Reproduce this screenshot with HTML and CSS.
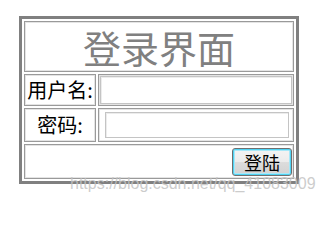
FILE: index.html
```html
<!DOCTYPE html>
<html>
<head>
<meta charset="utf-8">
<link rel="stylesheet" href="styles.css">
</head>
<body>
<table class="login">
  <tr class="row-title">
    <td colspan="2" class="title">登录界面</td>
  </tr>
  <tr class="row-user">
    <td class="label">用户名:</td>
    <td class="field"><input class="input input-user" type="text"></td>
  </tr>
  <tr class="row-pass">
    <td class="label">密码:</td>
    <td class="field"><input class="input input-pass" type="password"></td>
  </tr>
  <tr class="row-btn">
    <td colspan="2" class="actions"><button class="btn">登陆</button></td>
  </tr>
</table>
<div class="watermark">https://blog.csdn.net/qq_41083009</div>
</body>
</html>
```
FILE: styles.css
```css
html, body {
  margin: 0;
  padding: 0;
  background: #ffffff;
}
body {
  position: relative;
  width: 326px;
  height: 203px;
  overflow: hidden;
  font-family: "Noto Sans CJK SC", "Liberation Serif", serif;
}
.login {
  margin: 16px 0 0 19px;
  border: 3px solid #808080;
  border-spacing: 2px;
  width: 280px;
}
.login td {
  border: 1px solid #9a9a9a;
  box-shadow: inset 1px 1px 0 #e4e4e4, inset -1px -1px 0 #e4e4e4;
  padding: 0;
}
.row-title td { height: 49px; }
.row-user td { height: 30px; }
.row-pass td { height: 32px; }
.row-btn td { height: 33px; }
.title {
  text-align: center;
  font-size: 38px;
  line-height: 40px;
  color: #808080;
  padding-bottom: 2px;
}
.label {
  width: 70px;
  text-align: center;
  font-size: 20px;
  line-height: 24px;
  color: #000;
  white-space: nowrap;
}
.field {
  vertical-align: middle;
}
.input {
  display: block;
  box-sizing: border-box;
  border: 1px solid #c4c4c4;
  box-shadow: inset 1px 1px 0 #ececec;
  background: #fff;
  outline: none;
  padding: 0;
}
.input-user {
  width: 192px;
  height: 28px;
  margin-left: 1px;
}
.input-pass {
  width: 184px;
  height: 26px;
  margin-left: 6px;
}
.actions {
  text-align: right;
  vertical-align: middle;
  padding-right: 1px !important;
}
.btn {
  box-sizing: border-box;
  width: 60px;
  height: 28px;
  margin: 0;
  padding: 0;
  border: 1px solid #6f6f6f;
  border-radius: 3px;
  box-shadow: inset 0 0 0 1px #4fd3f3, inset 0 0 0 2px #a8e8f8;
  background: linear-gradient(#f4f4f4 0%, #ececec 48%, #dcdcdc 52%, #d2d2d2 100%);
  font-family: "Noto Sans CJK SC", sans-serif;
  font-size: 18px;
  line-height: 24px;
  color: #000;
  vertical-align: middle;
}
.watermark {
  position: absolute;
  left: 70px;
  top: 175px;
  font-family: "Liberation Sans", Arial, sans-serif;
  font-size: 16px;
  line-height: 18px;
  color: rgba(195, 195, 195, 0.85);
  white-space: nowrap;
}
```
